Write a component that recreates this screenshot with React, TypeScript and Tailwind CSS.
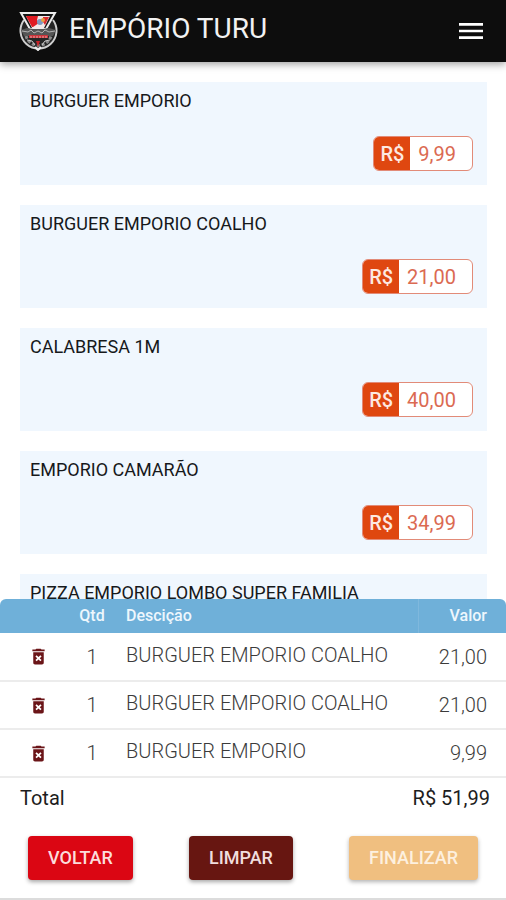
import React, { useState } from 'react';
import { MdDeleteForever, MdMenu } from 'react-icons/md';

interface Product {
  id: number;
  name: string;
  price: number;
}

interface CartItem {
  id: number;
  quantity: number;
  name: string;
  price: number;
}

const PRODUCTS: Product[] = [
  { id: 1, name: 'BURGUER EMPORIO', price: 9.99 },
  { id: 2, name: 'BURGUER EMPORIO COALHO', price: 21 },
  { id: 3, name: 'CALABRESA 1M', price: 40 },
  { id: 4, name: 'EMPORIO CAMARÃO', price: 34.99 },
  { id: 5, name: 'PIZZA EMPORIO LOMBO SUPER FAMILIA', price: 59.99 },
];

const INITIAL_CART: CartItem[] = [
  { id: 1, quantity: 1, name: 'BURGUER EMPORIO COALHO', price: 21 },
  { id: 2, quantity: 1, name: 'BURGUER EMPORIO COALHO', price: 21 },
  { id: 3, quantity: 1, name: 'BURGUER EMPORIO', price: 9.99 },
];

const formatPrice = (value: number) => value.toFixed(2).replace('.', ',');

const Logo: React.FC = () => (
  <svg viewBox="0 0 40 40" className="w-10 h-10" aria-hidden="true">
    <path d="M5 9A18 18 0 1 0 34 9" fill="#262626" stroke="#cfcfcf" strokeWidth="2" />
    <path d="M7 25a13 13 0 0 0 25 0" fill="none" stroke="#8b8b8b" strokeWidth="3" strokeDasharray="3 2" />
    <path d="M2 2h34L27 18H11z" fill="#161616" stroke="#ededed" strokeWidth="2" />
    <path d="M7 5h24l-6 12H13z" fill="#f3e9e9" />
    <path d="M7 5h12l-1 4 2 3-6 4h-1z" fill="#e01b22" />
    <path d="M24 6h6l-4 8-2-3z" fill="#d92a30" />
    <circle cx="21" cy="11" r="3" fill="#7f9ac0" />
    <circle cx="24" cy="9" r="2" fill="#e5a13d" />
    <path d="M2 19l6-2 6 1h10l6-1 7 2-3 6H5z" fill="#555" />
    <path d="M3 20l6 1 3-2 3 3 4-2 4 2 3-3 4 2 6-1" fill="none" stroke="#b4b4b4" />
    <path d="M10 24h19v3H10z" fill="#c9343a" />
    <path d="M11 26h17" stroke="#e9a9a9" strokeDasharray="2 1" />
    <path d="M8 29l5 1 3 4M31 29l-5 1-3 4" fill="none" stroke="#c9c9c9" />
    <path d="M17 30h4l-2 6z" fill="#c52228" />
    <path d="M16 36l3 3 3-3" fill="none" stroke="#ededed" strokeWidth="2" />
  </svg>
);

const ProductCard: React.FC<{ product: Product }> = ({ product }) => (
  <li className="bg-[#f0f7fe] pt-2 pb-3.5 pl-2.5 pr-3.5">
    <h2 className="text-lg leading-5.5 text-[#17191b]">{product.name}</h2>
    <div className="flex justify-end mt-6">
      <button type="button" className="flex h-[35px] items-stretch rounded-md border border-[#e28b78] bg-white overflow-hidden text-xl">
        <span className="flex items-center bg-[#df4710] px-1.5 font-medium text-[#fde9e2]">R$</span>
        <span className="flex items-center pl-2 pr-4 text-[#db6a52]">{formatPrice(product.price)}</span>
      </button>
    </div>
  </li>
);

const App: React.FC = () => {
  const [cart, setCart] = useState<CartItem[]>(INITIAL_CART);

  const total = cart.reduce((sum, item) => sum + item.quantity * item.price, 0);

  const handleRemove = (id: number) => {
    setCart(prev => prev.filter(item => item.id !== id));
  };

  return (
    <div className="flex flex-col h-screen bg-white font-['Roboto',sans-serif]">
      <header className="z-10 flex items-center h-15.5 shrink-0 bg-[#0d0d0d] px-[19px] shadow-[0_2px_8px_rgba(0,0,0,0.4)]">
        <Logo />
        <h1 className="ml-2.5 pb-1 flex-1 text-[28px] leading-8 text-[#f2f2f2]">EMPÓRIO TURU</h1>
        <button type="button" aria-label="Menu" className="text-white">
          <MdMenu size={32} />
        </button>
      </header>

      <main className="flex-1 min-h-0 overflow-y-auto [scrollbar-width:none]">
        <ul className="space-y-5 py-5 pl-5 pr-[19px]">
          {PRODUCTS.map(product => (
            <ProductCard key={product.id} product={product} />
          ))}
        </ul>
      </main>

      <section className="shrink-0 border-b-2 border-[#dcdcdc] bg-white">
        <table className="w-full text-[#3b3b3b]">
          <thead>
            <tr className="h-8.5 bg-[#6fb0d9] text-base text-[#eef7fd]">
              <th className="w-16 rounded-tl-md" aria-label="Remover" />
              <th className="w-14 text-center font-medium">Qtd</th>
              <th className="pl-1.5 text-left font-medium">Descição</th>
              <th className="w-22 rounded-tr-md border-l border-[#7fb8dd] pr-[19px] text-right font-medium">Valor</th>
            </tr>
          </thead>
          <tbody>
            {cart.map(item => (
              <tr key={item.id} className="h-12 border-b-2 border-[#ececec]">
                <td className="pl-7">
                  <button type="button" aria-label={`Remover ${item.name}`} className="block text-[#6b1518]" onClick={() => handleRemove(item.id)}>
                    <MdDeleteForever size={21} />
                  </button>
                </td>
                <td className="text-center text-xl font-light">{item.quantity}</td>
                <td className="pb-1 pl-1.5 text-xl font-light">{item.name}</td>
                <td className="pr-[19px] text-right text-xl font-light">{formatPrice(item.price)}</td>
              </tr>
            ))}
          </tbody>
        </table>

        <div className="flex items-center justify-between h-10 pl-5 pr-4 text-xl text-[#1d1d1d]">
          <span>Total</span>
          <span>R$ {formatPrice(total)}</span>
        </div>

        <div className="flex justify-between py-4.5 px-7 text-lg font-medium">
          <button type="button" className="h-11 px-5 rounded-sm bg-[#db0613] text-[#fbdcdc] shadow-[0_2px_4px_rgba(0,0,0,0.35)]">VOLTAR</button>
          <button type="button" className="h-11 px-5 rounded-sm bg-[#671611] text-[#f1dede] shadow-[0_2px_4px_rgba(0,0,0,0.35)]" onClick={() => setCart([])}>LIMPAR</button>
          <button type="button" className="h-11 px-5 rounded-sm bg-[#f0bf80] text-[#fdf0df] shadow-[0_2px_4px_rgba(0,0,0,0.3)]">FINALIZAR</button>
        </div>
      </section>
    </div>
  );
};

export default App;
